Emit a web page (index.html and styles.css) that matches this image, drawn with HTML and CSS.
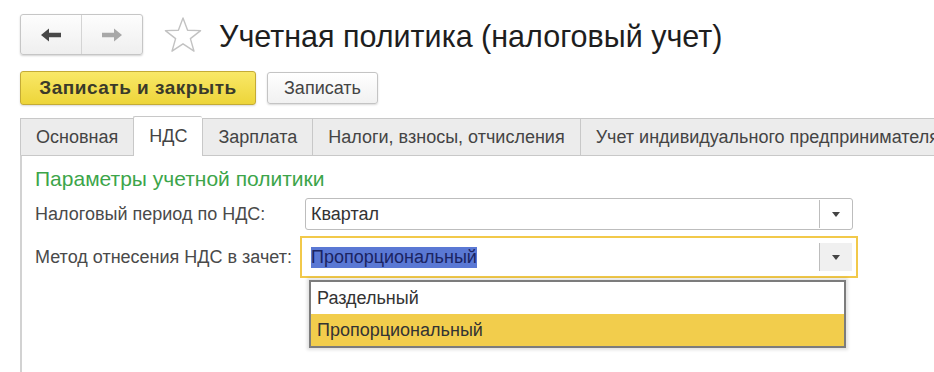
FILE: index.html
```html
<!DOCTYPE html>
<html lang="ru">
<head>
  <meta charset="UTF-8">
  <title>Учетная политика (налоговый учет)</title>
  <link rel="stylesheet" href="styles.css">
</head>
<body>
  <div class="header">
    <div class="nav-group">
      <button class="nav-btn" type="button">
        <svg width="22" height="14" viewBox="0 0 22 14"><path d="M1 7 L9 0.5 L9 4.8 L21 4.8 L21 9.2 L9 9.2 L9 13.5 Z" fill="#484848"/></svg>
      </button>
      <button class="nav-btn" type="button">
        <svg width="22" height="14" viewBox="0 0 22 14"><path d="M21 7 L13 0.5 L13 4.8 L1 4.8 L1 9.2 L13 9.2 L13 13.5 Z" fill="#a8a8a8"/></svg>
      </button>
    </div>
    <svg class="star" width="40" height="38" viewBox="0 0 40 38">
      <path d="M20 2 L24.6 14.2 L37.6 14.6 L27.4 22.6 L31 35.2 L20 27.8 L9 35.2 L12.6 22.6 L2.4 14.6 L15.4 14.2 Z" fill="none" stroke="#c2c2c2" stroke-width="1.4" stroke-linejoin="round"/>
    </svg>
    <h1 class="page-title">Учетная политика (налоговый учет)</h1>
  </div>

  <div class="toolbar">
    <button class="btn btn-primary" type="button">Записать и закрыть</button>
    <button class="btn" type="button">Записать</button>
  </div>

  <div class="tabs">
    <div class="tab">Основная</div>
    <div class="tab tab-active">НДС</div>
    <div class="tab">Зарплата</div>
    <div class="tab">Налоги, взносы, отчисления</div>
    <div class="tab">Учет индивидуального предпринимателя</div>
  </div>

  <div class="panel">
    <h2 class="group-title">Параметры учетной политики</h2>

    <div class="field-row">
      <label class="field-label">Налоговый период по НДС:</label>
      <div class="select">
        <span class="select-value">Квартал</span>
        <span class="select-btn"><span class="caret"></span></span>
      </div>
    </div>

    <div class="field-row">
      <label class="field-label">Метод отнесения НДС в зачет:</label>
      <div class="select select-focused">
        <span class="select-value"><span class="selected-text">Пропорциональный</span></span>
        <span class="select-btn"><span class="caret"></span></span>
        <ul class="dropdown">
          <li class="dropdown-item">Раздельный</li>
          <li class="dropdown-item dropdown-item-current">Пропорциональный</li>
        </ul>
      </div>
    </div>
  </div>
</body>
</html>
```

FILE: styles.css
```css
* {
  margin: 0;
  padding: 0;
  box-sizing: border-box;
  font-family: 'Liberation Sans', Arial, sans-serif;
}

body {
  background-color: #fff;
  color: #333;
  width: 934px;
  height: 372px;
  overflow: hidden;
}

.header {
  display: flex;
  align-items: center;
  padding: 14px 0 0 20px;
}

.nav-group {
  display: flex;
  width: 123px;
  height: 41px;
  border: 1px solid #c6c6c6;
  border-radius: 3px;
  background: linear-gradient(#fdfdfd, #efefef);
  box-shadow: 0 1px 2px rgba(0, 0, 0, 0.18);
}

.nav-btn {
  flex: 1;
  display: flex;
  align-items: center;
  justify-content: center;
  border: none;
  background: none;
}

.nav-btn + .nav-btn {
  border-left: 1px solid #d4d4d4;
}

.star {
  margin-left: 20px;
}

.page-title {
  margin-left: 16px;
  margin-top: 3px;
  font-size: 30.5px;
  font-weight: normal;
  color: #1e1e1e;
  white-space: nowrap;
}

.toolbar {
  display: flex;
  align-items: center;
  gap: 11px;
  padding: 16px 0 0 20px;
}

.btn {
  height: 32px;
  padding: 0 16px;
  border: 1px solid #c4c4c4;
  border-radius: 3px;
  background: linear-gradient(#ffffff, #f1f1f1);
  box-shadow: 0 1px 2px rgba(0, 0, 0, 0.15);
  font-size: 18px;
  color: #444;
}

.btn-primary {
  width: 236px;
  height: 34px;
  padding: 0;
  border-color: #c4ab36;
  background: linear-gradient(#f9e867, #edd53a);
  font-size: 19px;
  letter-spacing: 0.5px;
  font-weight: bold;
  color: #3a3a2a;
}

.tabs {
  display: flex;
  align-items: flex-end;
  margin-top: 11px;
  padding-left: 20px;
  white-space: nowrap;
}

.tab {
  flex-shrink: 0;
  height: 37px;
  padding: 0 15px;
  line-height: 36px;
  border: 1px solid #c8c8c8;
  border-bottom: none;
  border-right: none;
  background-color: #ececec;
  font-size: 18px;
  color: #444;
}

.tab-active {
  height: 40px;
  margin-bottom: -1px;
  line-height: 39px;
  background-color: #fff;
  border-top-left-radius: 2px;
  border-top-right-radius: 2px;
}

.tab-active + .tab {
  border-left: 1px solid #c8c8c8;
}

.panel {
  margin-left: 20px;
  height: 220px;
  border-top: 1px solid #c8c8c8;
  border-left: 2px solid #d2d2d2;
  padding: 11px 0 0 13px;
}

.group-title {
  font-size: 21px;
  line-height: 24px;
  font-weight: normal;
  color: #3ca54a;
  margin-bottom: 7px;
}

.field-row {
  display: flex;
  align-items: center;
  margin-bottom: 11px;
}

.field-label {
  width: 270px;
  font-size: 18px;
  color: #4a4a4a;
}

.select {
  position: relative;
  display: flex;
  width: 548px;
  height: 32px;
  border: 1px solid #bdbdbd;
  border-radius: 3px;
  background-color: #fff;
}

.select-value {
  flex: 1;
  display: flex;
  align-items: center;
  padding-left: 5px;
  font-size: 18px;
  color: #333;
}

.select-btn {
  width: 33px;
  display: flex;
  align-items: center;
  justify-content: center;
  border-left: 1px solid #bdbdbd;
  margin: 1px 0;
}

.caret {
  width: 0;
  height: 0;
  border-left: 4px solid transparent;
  border-right: 4px solid transparent;
  border-top: 5px solid #444;
}

.select-focused {
  border-color: #fff;
  border-radius: 0;
  outline: 2px solid #f2c94a;
  outline-offset: 3px;
}

.select-focused .select-btn {
  background-color: #f0f0f0;
}

.selected-text {
  background-color: #5a78d4;
  color: #1b2462;
}

.dropdown {
  position: absolute;
  top: 38px;
  left: 3px;
  width: 537px;
  list-style: none;
  border: 2px solid #7c7c7c;
  background-color: #fff;
  box-shadow: 0 0 3px 2px rgba(0, 0, 0, 0.12);
}

.dropdown-item {
  height: 32px;
  line-height: 32px;
  padding-left: 6px;
  font-size: 18px;
  color: #333;
}

.dropdown-item-current {
  background-color: #f2cd4c;
}
```
